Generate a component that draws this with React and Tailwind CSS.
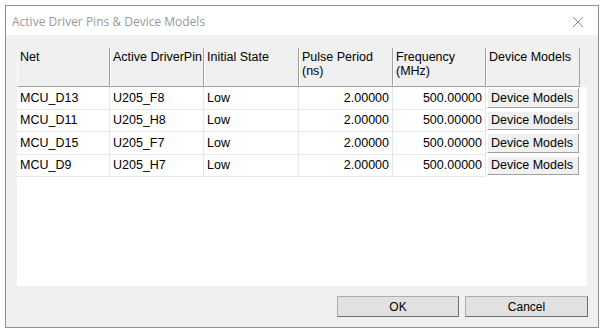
import React from "react";

const cols = [
  { label: "Net", w: "w-[93px]" },
  { label: "Active DriverPin", w: "w-[94px]" },
  { label: "Initial State", w: "w-[95px]" },
  { label: ["Pulse Period", "(ns)"], w: "w-[94px]" },
  { label: ["Frequency", "(MHz)"], w: "w-[93px]" },
  { label: "Device Models", w: "w-[94px]" },
];

const rows = [
  ["MCU_D13", "U205_F8", "Low", "2.00000", "500.00000"],
  ["MCU_D11", "U205_H8", "Low", "2.00000", "500.00000"],
  ["MCU_D15", "U205_F7", "Low", "2.00000", "500.00000"],
  ["MCU_D9", "U205_H7", "Low", "2.00000", "500.00000"],
];

const font = "font-['Liberation_Sans','Arial',sans-serif]";

export default function App() {
  return (
    <div className="w-[603px] h-[334px] bg-white pt-[5px] pl-[5px] overflow-hidden">
      <div className="w-[594px] h-[323px] border border-[#8f8f8f] flex flex-col bg-[#f0f0f0]">
        {/* title bar */}
        <div className="h-[29px] bg-white flex items-center justify-between pl-[6px] pr-[14px] pt-[2px]">
          <span className="text-[12px] text-[#999999] font-['Open_Sans','Noto_Sans',sans-serif]">
            Active Driver Pins &amp; Device Models
          </span>
          <svg width="12" height="12" viewBox="0 0 12 12">
            <path d="M1 1L11 11M11 1L1 11" stroke="#8a8a8a" strokeWidth="1" />
          </svg>
        </div>

        {/* client */}
        <div className={`flex-1 flex flex-col pl-[11px] pt-[13px] ${font} text-[12.5px] text-black whitespace-nowrap`}>
          <div className="w-[570px] h-[238px] bg-white flex flex-col">
            <div className="flex bg-[#f0f0f0] h-[39px]">
              {cols.map((c, i) => (
                <div
                  key={i}
                  className={`${c.w} h-full border-r border-b border-[#a0a0a0] border-l border-l-white px-[2px] pt-[2px] leading-[14px]`}
                >
                  {Array.isArray(c.label) ? (
                    <>
                      <div>{c.label[0]}</div>
                      <div>{c.label[1]}</div>
                    </>
                  ) : (
                    c.label
                  )}
                </div>
              ))}
              <div className="flex-1 bg-[#f0f0f0]" />
            </div>
            {rows.map((r, i) => (
              <div key={i} className="flex h-[22.5px]">
                {r.map((v, j) => (
                  <div
                    key={j}
                    className={`${cols[j].w} h-full border-r border-b border-[#e6e6e6] flex items-center px-[3px] pt-[1px] ${
                      j >= 3 ? "justify-end" : ""
                    }`}
                  >
                    {v}
                  </div>
                ))}
                <div className="w-[94px] h-full p-[1px] pb-[2px]">
                  <div className="h-full bg-[#f0f0f0] border border-t-white border-l-white border-r-[#a0a0a0] border-b-[#a0a0a0] flex items-center pl-[3px] pt-[1px]">
                    Device Models
                  </div>
                </div>
              </div>
            ))}
          </div>

          <div className="flex justify-end gap-[6px] pr-[10px] mt-[10px]">
            <button className="w-[122px] h-[21px] bg-[#e1e1e1] border border-[#adadad] border-r-[#707070] border-b-[#707070] text-[12px]">
              OK
            </button>
            <button className="w-[123px] h-[21px] bg-[#e1e1e1] border border-[#adadad] border-r-[#707070] border-b-[#707070] text-[12px]">
              Cancel
            </button>
          </div>
        </div>
      </div>
    </div>
  );
}
